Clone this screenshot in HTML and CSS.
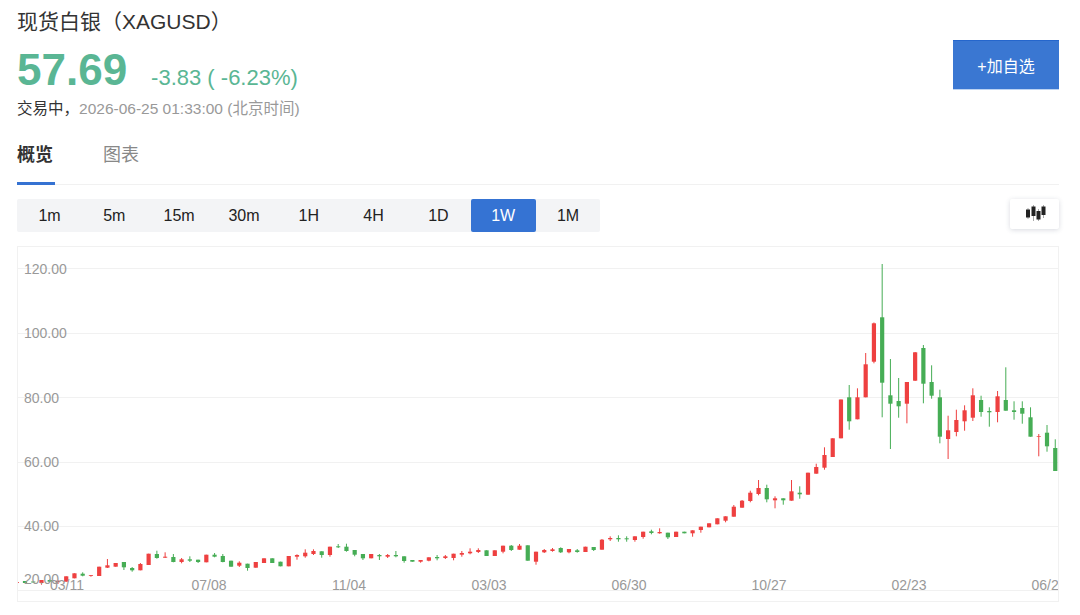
FILE: index.html
```html
<!DOCTYPE html>
<html lang="zh-CN">
<head>
<meta charset="utf-8">
<title>现货白银（XAGUSD）</title>
<link rel="stylesheet" href="styles.css">
</head>
<body>
<main class="page">
  <header class="head">
    <div class="info">
      <h1 class="title">现货白银（XAGUSD）</h1>
      <div class="quote">
        <span class="price">57.69</span>
        <span class="change">-3.83 ( -6.23%)</span>
      </div>
      <p class="status"><span class="state">交易中，</span><span class="time">2026-06-25 01:33:00 (北京时间)</span></p>
    </div>
    <button class="add">+加自选</button>
  </header>
  <nav class="tabs">
    <a class="tab active">概览</a>
    <a class="tab">图表</a>
  </nav>
  <div class="toolbar">
    <div class="periods">
      <span class="period">1m</span><span class="period">5m</span><span class="period">15m</span><span class="period">30m</span><span class="period">1H</span><span class="period">4H</span><span class="period">1D</span><span class="period on">1W</span><span class="period">1M</span>
    </div>
    <button class="type" aria-label="K线">
      <svg class="type-icon" width="22" height="20" viewBox="0 0 22 20">
        <path class="type-wick" d="M4 4V15M9.500 1V17M14.500 5V17M19.500 1V14"/>
        <path class="type-body" d="M4 5.500V13.500M9.500 2.500V12M14.500 7V15.500M19.500 2.500V11"/>
      </svg>
    </button>
  </div>
  <section class="chart">
    <svg class="plot" width="1040" height="354" viewBox="18 253 1040 354">
      <g class="grid">
        <path d="M18 274.500H1058M18 339.500H1058M18 403.500H1058M18 468.500H1058M18 532.500H1058M18 596.500H1058"/>
      </g>
      <g id="candles"></g>
      <g class="labels">
        <text x="24" y="279.500">120.00</text>
        <text x="24" y="344">100.00</text>
        <text x="24" y="408.500">80.00</text>
        <text x="24" y="473">60.00</text>
        <text x="24" y="537">40.00</text>
        <text x="24" y="589.500">20.00</text>
        <text class="mid" x="67" y="596">03/11</text>
        <text class="mid" x="209" y="596">07/08</text>
        <text class="mid" x="349" y="596">11/04</text>
        <text class="mid" x="489" y="596">03/03</text>
        <text class="mid" x="629" y="596">06/30</text>
        <text class="mid" x="769" y="596">10/27</text>
        <text class="mid" x="909" y="596">02/23</text>
        <text class="mid" x="1049" y="596">06/23</text>
      </g>
    </svg>
  </section>
</main>
<script src="chart.js"></script>
</body>
</html>
```
FILE: styles.css
```css
html, body {
  margin: 0;
  height: 100%;
  overflow: hidden;
  background: #fff;
}
body {
  font-family: "Liberation Sans", "Noto Sans CJK SC", sans-serif;
  color: #222;
}
.page {
  padding: 0 21px 0 17px;
}
.head {
  display: flex;
  justify-content: space-between;
  align-items: flex-start;
}
.title {
  margin: 8px 0 0;
  font-size: 21px;
  line-height: 28px;
  font-weight: 400;
  color: #333;
}
.quote {
  display: flex;
  align-items: baseline;
  margin-top: 9px;
  height: 50px;
}
.price {
  font-size: 44px;
  line-height: 50px;
  font-weight: 700;
  color: #5ab694;
}
.change {
  margin-left: 24px;
  font-size: 22px;
  color: #5ab694;
}
.status {
  margin: 3px 0 0;
  font-size: 15.500px;
  line-height: 22px;
}
.state { color: #333; }
.time { color: #999; }
.add {
  margin-top: 40px;
  width: 106px;
  height: 50px;
  border: 0;
  border-top: 1px solid #2566cc;
  border-bottom: 1px solid #bcd3f2;
  background: #3a77d2;
  color: #fff;
  font: 16px "Liberation Sans", "Noto Sans CJK SC", sans-serif;
}
.tabs {
  display: flex;
  gap: 48px;
  margin-top: 19px;
  height: 46px;
  border-bottom: 1px solid #f1f1f1;
  box-sizing: border-box;
}
.tab {
  display: block;
  font-size: 18px;
  line-height: 32px;
  color: #888;
  height: 45px;
}
.tab.active {
  width: 38px;
  font-weight: 700;
  color: #333;
  height: 46px;
  box-sizing: border-box;
  border-bottom: 3px solid #3572d2;
}
.toolbar {
  display: flex;
  justify-content: space-between;
  margin-top: 14px;
}
.periods {
  display: flex;
  background: #f3f4f6;
  border-radius: 2px;
}
.period {
  width: 65px;
  height: 33px;
  margin-right: -0.200px;
  font-size: 16px;
  line-height: 33px;
  text-align: center;
  color: #222;
}
.period.on {
  background: #3573d3;
  border-radius: 2px;
  color: #fff;
}
.type {
  width: 49px;
  height: 30px;
  padding: 0;
  border: 0;
  border-radius: 2px;
  background: #fff;
  box-shadow: 0 1px 5px rgba(60, 70, 100, 0.2);
  display: flex;
  align-items: center;
  justify-content: center;
}
.type-wick { stroke: #aaa; stroke-width: 1; fill: none; }
.type-body { stroke: #222; stroke-width: 4; fill: none; }
.chart {
  margin-top: 14px;
  width: 1042px;
  height: 356px;
  box-sizing: border-box;
  border: 1px solid #f1f1f1;
}
.plot { display: block; }
.grid path { stroke: #f1f1f1; stroke-width: 1; fill: none; }
.labels text {
  font-size: 14px;
  fill: #999;
}
.labels .mid { text-anchor: middle; }
.up { fill: #ee4040; }
.down { fill: #46ad55; }
```
FILE: chart.js
```js
// [index, colour, wickTop, wickBottom, bodyTop, bodyBottom]
var d = [
[0,'r',588,589,588,589],[1,'g',587,589,587,589],[2,'g',587.5,588.5,587.5,588.5],[3,'r',586,590.7,586,589],[4,'g',585.5,588,586,587.7],[5,'r',586.7,590,586.7,588],
[6,'r',582.3,587.7,582.3,587.7],[7,'r',579.3,584.3,579.3,584.3],[8,'g',578.3,582.3,579.7,581.7],[9,'r',581,582.7,581,581.8],[10,'r',572.7,582,572.7,582],
[11,'r',565,574,571.3,573.7],[12,'r',569,572.7,569,572.7],[13,'g',568,576,568,573.3],[14,'g',573,577.7,574,576.3],[15,'r',569,576.3,570,576.3],
[16,'r',559.7,571,559.7,571],[17,'g',556.7,564.7,560,564],[18,'r',558.3,564,562.7,563.7],[19,'g',560,568.3,563,568],[20,'r',564,569.3,565.3,568],
[21,'g',562.3,568,565.3,566.7],[22,'g',565.7,569,565.7,568],[23,'r',560.7,568.3,560.7,568.3],[24,'g',559,563.3,560.7,562.7],[25,'g',560,568.3,562,568],
[26,'g',566.7,572.7,566.7,572.7],[27,'r',567.3,573,568.7,571.7],[28,'g',569.7,576.7,569.7,574],[29,'r',568,573.7,568,573.7],[30,'r',564.3,569,564.3,569],
[31,'g',564.3,569,564.3,569],[32,'g',567.7,572.3,567.7,572.3],[33,'r',562,572.3,562,572.3],[34,'r',560.3,565.7,561,562.7],[35,'r',555.3,563.7,558.7,562.3],
[36,'r',555.3,561,557,560],[37,'g',557.3,563.7,557.3,561],[38,'r',552.7,562.7,552.7,561],[39,'g',550,554,552.3,553.3],[40,'g',549.7,557.7,552.7,557],
[41,'g',556,562.3,556,560.7],[42,'g',560,566,560,564.3],[43,'r',560,564.3,560,564.3],[44,'g',560,566,561,562.3],[45,'r',560,564,561,562.7],
[46,'g',557,563.3,561,562.3],[47,'g',562.3,568.7,562.3,567],[48,'g',566,567.7,566,567.7],[49,'r',566,568.7,566,567.7],[50,'r',563.3,567.3,563.3,566.7],
[51,'g',561,566.3,563,564.3],[52,'r',561,565,562.3,564],[53,'r',559.7,566.3,559.7,564],[54,'r',557,562.7,559,560.7],[55,'r',554.3,560.3,557.7,559.3],
[56,'r',554.3,559,556,558],[57,'g',556.3,562,556.3,562],[58,'r',556.3,562,556.3,562],[59,'r',551.7,559.3,551.7,557.7],[60,'g',551,557,551.7,556],
[61,'r',550,555.7,551.7,555.7],[62,'g',551.3,566.7,551.3,566.7],[63,'r',557.7,570.7,557.7,567.7],[64,'r',555,559,556,558.3],[65,'r',554,557.7,555.3,557],
[66,'g',553.3,559,554,558.3],[67,'r',555,559.3,555,558.3],[68,'g',555,558.7,556.3,558],[69,'r',552.7,558,552.7,558],[70,'g',553,557,553,556],
[71,'r',545,555.7,545.7,555.7],[72,'r',542.3,547,544,545.3],[73,'g',541.3,547.7,544,545.3],[74,'g',542.3,547.7,544.3,545.3],[75,'r',542.3,547.7,542.3,546],
[76,'r',537.7,544.7,537.7,543],[77,'g',535.7,540.3,537.3,539],[78,'r',534.3,539.7,538,539.3],[79,'g',538.7,545,538.7,543.3],[80,'r',537.7,543,537.7,543],
[81,'g',537.7,539.3,537.7,539.3],[82,'r',536.3,542.7,536.3,539.3],[83,'r',532.7,538.7,532.7,536],[84,'r',529.3,533.3,529.3,533.3],[85,'r',524.3,530.3,524.3,530.3],
[86,'r',522.3,528.3,522.3,526.7],[87,'r',511,522.7,512.7,522.7],[88,'r',506,513.7,506.7,513.7],[89,'r',496.7,508.3,498.7,507],[90,'r',486,501.3,494,500],
[91,'g',490.7,508.3,494,505.3],[92,'r',502.3,514.3,504.3,506.3],[93,'g',504.3,510.7,504.3,506.3],[94,'r',486,506.7,497.3,506.7],[95,'g',492.3,504.7,498.7,500.3],
[96,'r',478.7,500.7,478.7,500.7],[97,'r',469.7,479.7,473,479.7],[98,'r',453.3,475.7,461,473.7],[99,'r',444.3,463,444.3,463],[100,'r',405.5,444.3,405.5,444.3],
[101,'g',391,435.7,403.3,427.3],[102,'r',394.3,425.3,403.3,425.3],[103,'r',359,403.3,370.3,403.3],[104,'r',328.5,369.3,329.3,367.7],[105,'g',270,423.3,323.3,388.7],
[106,'g',365,455,401.3,409.7],[107,'g',384,423.7,407,412.3],[108,'r',388,429.3,388,409.7],[109,'r',358,387,358.3,386.7],[110,'g',351,409.3,354,389.7],
[111,'g',371.3,404.7,388,401.7],[112,'g',395.7,449.3,403.3,442.7],[113,'r',421.7,465,436.3,445],[114,'r',415.7,442.3,426,438],[115,'r',411.3,436.7,416.3,427.3],
[116,'r',394.3,427,401.3,423.7],[117,'g',401.7,422.7,406,418],[118,'g',413.3,432.7,417,418.3],[119,'r',397,428.3,402.3,418],[120,'g',373.3,416.7,406,416.7],
[121,'g',407.3,425.7,416.3,418],[122,'g',407.3,429.7,414,419.7],[123,'g',413.3,442.7,423.3,442.7],[124,'r',440,462.3,442,442.7],[125,'g',431,457.7,438.7,452.3],
[126,'g',445.3,477,454,477]
];
var NS = 'http://www.w3.org/2000/svg';
var g = document.getElementById('candles');
function rect(x, y, w, h, cls) {
  var r = document.createElementNS(NS, 'rect');
  r.setAttribute('x', x);
  r.setAttribute('y', y);
  r.setAttribute('width', w);
  r.setAttribute('height', h);
  r.setAttribute('class', cls);
  g.appendChild(r);
}
d.forEach(function (c) {
  var x = 16.76 + 8.242 * c[0];
  var cls = c[1] === 'r' ? 'up' : 'down';
  rect(x - 0.5, c[2], 1, c[3] - c[2], cls);
  rect(x - 2.1, c[4], 4.2, c[5] - c[4], cls);
});
```
